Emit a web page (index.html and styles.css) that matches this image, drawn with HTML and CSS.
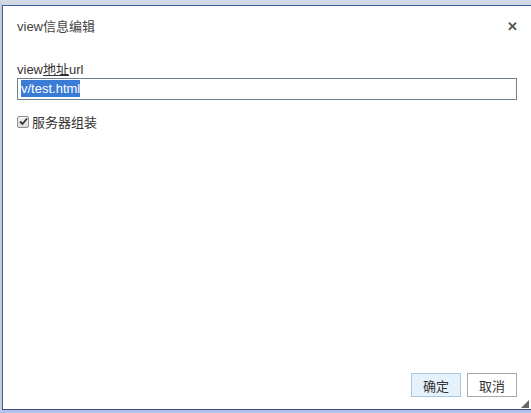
FILE: index.html
```html
<!DOCTYPE html>
<html>
<head>
<meta charset="utf-8">
<link rel="stylesheet" href="styles.css">
</head>
<body>
<div class="frame">
  <div class="dialog">
    <div class="titlebar">
      <span class="title">view信息编辑</span>
      <span class="close">✕</span>
    </div>
    <div class="body">
      <div class="label">view<u>地址</u>url</div>
      <div class="input"><span class="sel">v/test.html</span></div>
      <label class="check"><span class="box"><svg width="9" height="9" viewBox="0 0 9 9"><path d="M1 4.5 L3.5 7 L8 1.5" fill="none" stroke="#333" stroke-width="1.8"/></svg></span>服务器组装</label>
    </div>
    <div class="footer">
      <button class="btn primary">确定</button>
      <button class="btn">取消</button>
    </div>
    <span class="grip"></span>
  </div>
</div>
</body>
</html>
```
FILE: styles.css
```css
* { box-sizing: border-box; }
html, body { margin: 0; padding: 0; }
body {
  width: 531px;
  height: 413px;
  font-family: "Liberation Sans", Arial, "Noto Sans CJK SC", sans-serif;
  font-size: 13px;
  color: #333;
  overflow: hidden;
}
.frame {
  width: 531px;
  height: 413px;
  background: #d3dbe6;
  border-top: 5px solid #d1d9e4;
  border-left: 2px solid #c3cde0;
  border-bottom: 3px solid #b2c1ea;
}
.dialog {
  position: relative;
  height: 100%;
  background: #fff;
  border-top: 1px solid #3e5d9c;
  border-left: 1px solid #4d5b7c;
  border-bottom: 1px solid #3c4a7c;
  display: flex;
  flex-direction: column;
  padding: 0 14px 0 14px;
}
.titlebar {
  display: flex;
  justify-content: space-between;
  align-items: center;
  padding-top: 9px;
  height: 32px;
}
.title { line-height: 16px; color: #444; }
.close {
  font-size: 13px;
  font-weight: bold;
  color: #555;
  margin-right: -1px;
  line-height: 16px;
}
.body { padding-top: 24px; }
.label { line-height: 16px; color: #333; }
.label u { text-decoration: underline; }
.input {
  width: 500px;
  height: 22px;
  border: 1px solid #6f8090;
  padding: 2px 3px;
  line-height: 16px;
}
.sel {
  background: #3a7bd5;
  color: #fff;
  padding: 1px 0;
}
.check {
  display: flex;
  align-items: center;
  margin-top: 15px;
  line-height: 16px;
}
.box {
  width: 12px;
  height: 12px;
  border: 1px solid #8f8f8f;
  border-radius: 2px;
  background: linear-gradient(#f4f4f4, #dcdcdc);
  display: inline-flex;
  align-items: center;
  justify-content: center;
  margin-right: 3px;
  margin-top: -3px;
}
.footer {
  margin-top: auto;
  display: flex;
  justify-content: flex-end;
  gap: 6px;
  padding-bottom: 12px;
}
.btn {
  font-family: inherit;
  font-size: 13px;
  color: #333;
  width: 50px;
  height: 24px;
  border: 1px solid #a9a9a9;
  background: #fff;
  padding: 0;
}
.btn.primary {
  background: #e5f1fb;
  border-color: #a8c6e0;
}
.grip {
  position: absolute;
  right: 2px;
  bottom: 1px;
  width: 0;
  height: 0;
  border-left: 8px solid transparent;
  border-bottom: 8px solid #666;
}
```
